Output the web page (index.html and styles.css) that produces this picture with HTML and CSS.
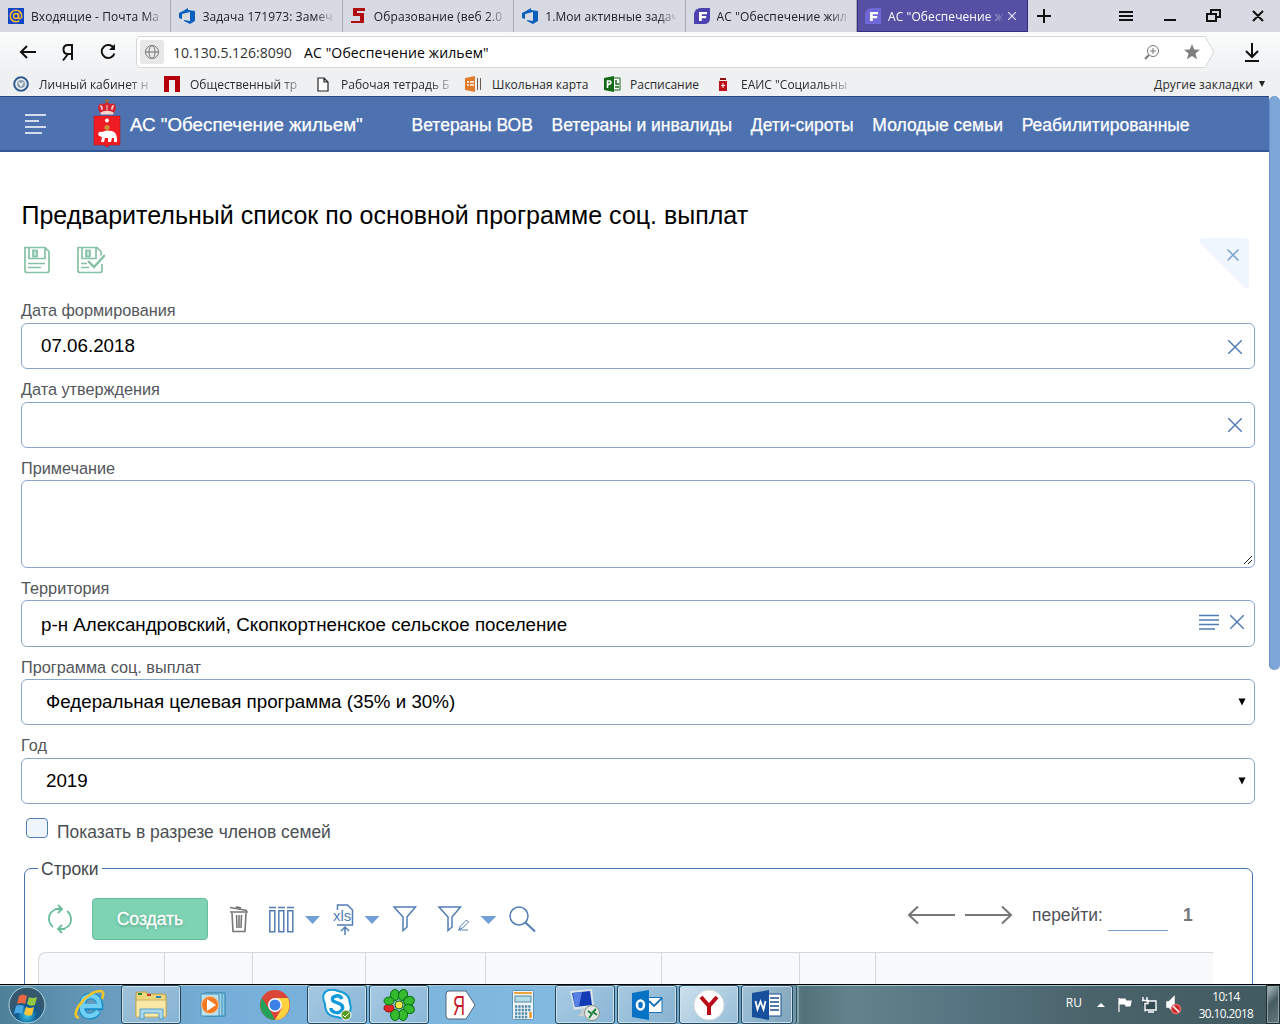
FILE: index.html
```html
<!DOCTYPE html>
<html lang="ru">
<head>
<meta charset="utf-8">
<title>АС "Обеспечение жильем"</title>
<link rel="stylesheet" href="styles.css">
</head>
<body>
<header class="tabs">
  <div class="tab"><svg width="16" height="16"><rect width="16" height="16" fill="#0b45c9"/><path d="M10.6 5.2v4.3c0 2 3.2 1.500 3.200-1.500A5.800 5.800 0 1 0 8 13.800c1.300 0 2.500-.3 3.400-.9" fill="none" stroke="#ffb62e" stroke-width="1.500"/><circle cx="8" cy="8" r="2.500" fill="none" stroke="#ffb62e" stroke-width="1.500"/></svg><span>Входящие - Почта Ма</span></div>
  <div class="tab"><svg width="16" height="16"><path d="M0 5l4-2 5-3v2l7 1v10l-5 3-6-3v-1l6 1V4L3 6v5L0 10z" fill="#0b5fbd"/></svg><span>Задача 171973: Замеч</span></div>
  <div class="tab"><svg width="16" height="16"><path d="M2 0h12v3H6v2h7v10H0v-2h9V8H2z" fill="#b00d10"/></svg><span>Образование (веб 2.0</span></div>
  <div class="tab"><svg width="16" height="16"><path d="M0 5l4-2 5-3v2l7 1v10l-5 3-6-3v-1l6 1V4L3 6v5L0 10z" fill="#0b5fbd"/></svg><span>1.Мои активные задач</span></div>
  <div class="tab"><svg width="16" height="16"><path d="M0 16V6Q1 0 7 0h9v10q0 6-6 6z" fill="#4a42b0"/><path d="M5 13V4h8v2.300H7.800v1.700h4.400v2.200H7.800V13z" fill="#fff"/></svg><span>АС "Обеспечение жил</span></div>
  <div class="tab active"><svg width="16" height="16"><path d="M0 16V6Q1 0 7 0h9v16z" fill="#7068d8"/><path d="M5 13V4h8v2.300H7.800v1.700h4.400v2.200H7.800V13z" fill="#fff"/></svg><span>АС "Обеспечение ж</span><svg class="close" width="8" height="8"><path d="M0 0l8 8M8 0L0 8" stroke="#e5e3ff" stroke-width="1.200"/></svg></div>
  <svg class="controls" width="252" height="32" fill="none" stroke="#111" stroke-width="2"><path d="M9 16h14M16 9v14M91 12h14M91 16h14M91 20h14M136 20h12M179 14h9v7h-9zM183 13v-3h9v7h-4M225 11l10 10M235 11l-10 10"/></svg>
</header>
<div class="toolbar">
  <svg width="136" height="40" fill="none" stroke="#111" stroke-width="2"><path d="M21 20h15M27 14l-6 6 6 6M72 28V13h-4q-4.500 0-4.500 4.500t4.500 4.500h4M68 22L63 28.500M114 16.500a6.500 6.500 0 1 0 .4 5"/><path d="M115 12v6h-6z" fill="#111" stroke="none"/></svg>
  <div class="address">
    <svg class="outline" width="1080" height="32"><path d="M5 .5h1064l9 15.500-9 15.500H5Q.5 31.500 .5 27V5Q.5.5 5 .5z" fill="#fff" stroke="#d5d7d9"/></svg>
    <div class="globe"><svg width="16" height="16" fill="none" stroke="#777"><circle cx="8" cy="8" r="6.500"/><ellipse cx="8" cy="8" rx="3" ry="6.500"/><path d="M1.500 8h13"/></svg></div>
    <span class="ip">10.130.5.126:8090</span><span class="site">АС "Обеспечение жильем"</span>
    <svg class="addr-icons" width="62" height="24"><g fill="none" stroke="#777"><circle cx="11" cy="11" r="5.500"/><path d="M8 11h6M11 8v6"/><path d="M7 15l-4 4" stroke-width="2"/></g><path d="M50 4l2.200 5.500 5.800.3-4.600 3.700 1.700 5.800-5.100-3.300-5.100 3.300 1.700-5.800L42 9.800l5.800-.3z" fill="#7d7d7d"/></svg>
  </div>
  <svg class="download" width="16" height="20" fill="none" stroke="#111" stroke-width="2"><path d="M8 1v14M2 9l6 6 6-6M1 19h14"/></svg>
</div>
<nav class="bookmarks">
  <div class="bm b1"><svg width="16" height="16"><circle cx="8" cy="8" r="6.800" fill="#eee" stroke="#315e91" stroke-width="2"/><circle cx="8" cy="8" r="4" fill="#8da4b7"/><path d="M5 6l3 5 3-5-3 1z" fill="#eee"/></svg><span>Личный кабинет н</span></div>
  <div class="bm b2"><svg width="16" height="16"><path d="M0 0h16v16h-5V4H5v12H0z" fill="#b40009"/></svg><span>Общественный тр</span></div>
  <div class="bm b3"><svg width="12" height="15"><path d="M1 1h6l4 4v9H1zM7 1v4h4" fill="#fff" stroke="#222" stroke-width="1.200"/></svg><span>Рабочая тетрадь Б</span></div>
  <div class="bm b4"><svg width="17" height="16"><path d="M0 2l10-2v16L0 14z" fill="#df7b29"/><path d="M12.500 2v12M15.500 2v12" stroke="#6a5a50"/><path d="M2 6h2M5 6h4M2 9h2M5 9h4" stroke="#fff" stroke-width="1.500"/></svg><span>Школьная карта</span></div>
  <div class="bm b5"><svg width="17" height="16"><path d="M9 2h7v12H9z" fill="#fff" stroke="#17691c"/><path d="M0 2l10-2v16L0 14z" fill="#126a17"/><path d="M3.500 12V5H6q3 2-2.500 4" fill="none" stroke="#fff" stroke-width="1.600"/><path d="M12 4v4h3M11 11h4" stroke="#17691c" stroke-width="1.500" fill="none"/></svg><span>Расписание</span></div>
  <div class="bm b6"><svg width="10" height="14"><path d="M1 4h8v10H1z" fill="#bd1018"/><path d="M2 1h6v2H2z" fill="#8b1014"/><path d="M5 6v5M3 8.500h4" stroke="#fff"/></svg><span>ЕАИС "Социальны</span></div>
  <div class="other"><span>Другие закладки</span><svg width="6" height="6"><path d="M0 0h6L3 6z" fill="#222"/></svg></div>
</nav>
<main class="viewport">
  <div class="page">
    <header class="app-header">
      <svg class="burger" width="22" height="20" stroke="#fff" stroke-width="1.300"><path d="M0 1h21M0 7h14M0 13h21M0 19h17"/></svg>
      <svg class="crest" width="28" height="50"><path d="M1 17h26v29H17l-3 2-3-2H1z" fill="#f01c24" stroke="#b71820" stroke-width=".6"/><path d="M5 8q1-5 6-3l3-2 3 2q5-2 6 3 0 3-2 6H7Q5 11 5 8z" fill="#d42431"/><path d="M8 13.500q6-3 12 0v1.500H8zM9 11q1-5-2-4M19 11q-1-5 2-4M14 11V6" fill="#f7dcd5" stroke="#f4d3cd"/><path d="M14 0v4M12 2h4" stroke="#9c6c30" stroke-width="1.500"/><circle cx="14" cy="21.500" r="2" fill="#fff"/><path d="M14 26v8M11.500 28.500h5" stroke="#c98f3c" stroke-width="3"/><path d="M5 35q1-3 4-2l3-1q6-1 9 1 3 2 3 8v2h-3v-4h-2l-1 4h-3v-4h-3l-1 4H8l1-5-3-1z" fill="#fff"/></svg>
      <span class="brand">АС "Обеспечение жильем"</span>
      <nav class="menu"><span>Ветераны ВОВ</span><span>Ветераны и инвалиды</span><span>Дети-сироты</span><span>Молодые семьи</span><span>Реабилитированные</span></nav>
    </header>
    <section class="content">
      <h1><span>Предварительный список по основной программе соц. выплат</span></h1>
      <div class="actions">
        <svg width="82" height="28" fill="none" stroke="#85c1a4" stroke-width="1.700"><path d="M2 1.500h20l4 4v19q0 2-2 2H4q-2 0-2-2zM6 1.500v11h16V1.500M5 17.500h17M5 21.500h13"/><rect x="10" y="4.500" width="4" height="6" fill="#c7e3df"/><path d="M79 18v6.500q0 2-2 2H57q-2 0-2-2v-23h19l4 4v4M59 1.500v11h14v-11M58 17.500h6M58 21.500h8"/><rect x="63" y="4.500" width="4" height="6" fill="#c7e3df"/><path d="M65 15l6 6 11-12" stroke-width="2.400"/></svg>
        <svg class="corner" width="51" height="52"><path d="M4 0h41q5 0 5 5v41q0 5-4 4L1 5q-2-4 3-5z" fill="#eff6fd"/><path d="M28.500 11.500l11 11M39.500 11.500l-11 11" stroke="#7ba2cf" stroke-width="1.500"/></svg>
      </div>
      <div class="form">
        <label><span>Дата формирования</span></label>
        <div class="field"><span>07.06.2018</span><svg class="x low" width="14" height="14"><path d="M0 0l14 14M14 0L0 14"/></svg></div>
        <label><span>Дата утверждения</span></label>
        <div class="field"><svg class="x" width="14" height="14"><path d="M0 0l14 14M14 0L0 14"/></svg></div>
        <label><span>Примечание</span></label>
        <div class="field area"><svg width="8" height="8" stroke="#222"><path d="M0 8l8-8M4 8l4-4"/></svg></div>
        <label><span>Территория</span></label>
        <div class="field territory"><span>р-н Александровский, Скопкортненское сельское поселение</span><svg class="lines" width="20" height="16"><path d="M0 1.500h20M0 6h20M0 10.500h20M0 15h16"/></svg><svg class="x" width="14" height="14"><path d="M0 0l14 14M14 0L0 14"/></svg></div>
        <label><span>Программа соц. выплат</span></label>
        <div class="field select"><span>Федеральная целевая программа (35% и 30%)</span><svg width="8" height="8"><path d="M.5 .5h7L4 7.500z"/></svg></div>
        <label><span>Год</span></label>
        <div class="field select"><span>2019</span><svg width="8" height="8"><path d="M.5 .5h7L4 7.500z"/></svg></div>
      </div>
      <div class="check"><i></i><span>Показать в разрезе членов семей</span></div>
      <fieldset>
        <legend><span>Строки</span></legend>
        <div class="grid-tools">
          <svg class="refresh" width="24" height="30" fill="none" stroke="#69bd9b" stroke-width="1.800"><path d="M9 5Q-1 8 1.500 18q1 3 3.500 5M7 5h6M10 1l4 4-4 4M15 25q10-3 7.500-13Q21.500 9 19 7M17 25h-6M14 21l-4 4 4 4"/></svg>
          <button><span>Создать</span></button>
          <svg class="trash" width="20" height="28" fill="none" stroke="#777" stroke-width="1.600"><path d="M1 6h18M3 7l1 18.500h12L17 7M7.500 9l.5 13M10 9v13M12.500 9l-.5 13M1 1.500l17 3M7 2.500l1-1.500 4 1"/></svg>
          <svg class="toolset" width="270" height="32" fill="none" stroke="#527eb5" stroke-width="1.500"><path d="M1 3.500h7M10 3.500h7M19 3.500h7M1.800 6.800h5v21h-5zM10.800 6.800h5v21h-5zM19.800 6.800h5v21h-5z"/><path d="M37 12h15l-7.500 8zM96.500 12h15l-7.500 8zM212.500 12h16l-8 8z" fill="#70a0d5" stroke="none"/><path d="M69.500 6V1h10l5 5v15H69M77 31v-8M73 27l4-4 4 4"/><path d="M126 3h21.500l-8.500 10v10l-4 3.500V13zM171 3h21.500l-8.500 10v10l-4 3.500V13z"/><path d="M191 25.500l1.500-3.500 6-6 2 2-6 6zM190 26h10" stroke-width="1"/><circle cx="251" cy="12" r="9"/><path d="M257.500 18.500l9.500 9" stroke-width="2"/><text x="65" y="17">xls</text></svg>
          <div class="pager"><svg width="105" height="20" fill="none" stroke="#777" stroke-width="2"><path d="M47 10H1M10 1.500L1 10l9 8.500M57 10h46M94 1.500l9 8.500-9 8.500"/></svg><span>перейти:</span><i></i><b>1</b></div>
        </div>
        <div class="thead"><i></i><i></i><i></i><i></i><i></i><i></i><i></i><i></i></div>
      </fieldset>
    </section>
  </div>
  <div class="scroll"><i></i></div>
</main>
<footer class="taskbar">
  <div class="task start"><svg width="38" height="38"><defs><radialGradient id="orb" cy=".8"><stop stop-color="#35c7ed"/><stop offset=".55" stop-color="#125a91"/><stop offset="1" stop-color="#35586e"/></radialGradient></defs><circle cx="19" cy="19" r="18" fill="url(#orb)" stroke="#acd4df"/><path d="M11 10q4-3 8 0l-2 8q-4-2-8 0z" fill="#ed6840"/><path d="M21 11q4 2 8 0l-2 8q-4 2-8-1z" fill="#95c843"/><path d="M8 20q4-2 8 0l-2 8q-4-2-8 0z" fill="#47a9e6"/><path d="M18 21q4 2 8 0l-2 8q-4 2-8-1z" fill="#ffc737"/></svg></div>
  <div class="task ie"><svg width="32" height="32" fill="none"><path d="M25 22q-3 6-9 5-8-1-7-11 1-9 9-9 9 0 9 11H11" stroke="#168dca" stroke-width="6.500"/><path d="M25 22q-3 5-9 5-8-1-7-11 1-9 9-9 8 0 8.500 10H11" stroke="#6fd0f4" stroke-width="4.500"/><path d="M6 29C-5 27 14 1 28 2q4 1 1 8" stroke="#f2c629" stroke-width="2.500"/></svg></div>
  <div class="task open"><svg width="34" height="32"><path d="M2 5q0-2 2-2h8l2 2h16q2 0 2 2v20H2z" fill="#efd77b" stroke="#b99c4a"/><path d="M2 11h30v17H2z" fill="#f8e9a7" stroke="#c7ae63"/><path d="M4 5h4" stroke="#25863b" stroke-width="2"/><path d="M13 6h4" stroke="#c63727" stroke-width="2"/><path d="M22 8h5" stroke="#2b83bd" stroke-width="2"/><path d="M6 30V20h23v10h-4v-6H10v6z" fill="#a9d9ee" stroke="#5a9cc2"/></svg></div>
  <div class="task"><svg width="28" height="28"><path d="M7 2h19v23H7z" fill="#8bcbe4" stroke="#317da6"/><path d="M5 2h18v23H5z" fill="#a0d5ea" stroke="#4791b6"/><path d="M2 3h18v22H2z" fill="#b7e1ef" stroke="#4791b6"/><circle cx="11" cy="14" r="8.500" fill="#f27821" stroke="#f9c38e"/><path d="M8 8v12l9-6z" fill="#fff"/></svg></div>
  <div class="task"><svg width="30" height="30"><circle cx="15" cy="15" r="15" fill="#dc4638"/><path d="M2 8l9 14 4 8A15 15 0 0 1 2 8" fill="#23a05a"/><path d="M15 8h13q4 10-3 18-4 4-10 4l7-12z" fill="#ffd23e"/><circle cx="15" cy="15" r="7" fill="#fff"/><circle cx="15" cy="15" r="5.500" fill="#3d80e8"/></svg></div>
  <div class="task open"><svg width="32" height="32"><path d="M8 1q5-1 9 1 12 2 12 13 2 5-1 9-4 7-12 4Q4 27 4 15-1 4 8 1z" fill="#fff" stroke="#129bd8" stroke-width="2"/><path d="M21 10q-2-4-6-3-5 1-3 5l7 3q4 2 2 6-3 4-8 2-3-1-3-4" fill="none" stroke="#129bd8" stroke-width="3.500"/><circle cx="25" cy="26" r="5" fill="#579b22" stroke="#fff"/><path d="M22 26l2 2 4-4" fill="none" stroke="#fff"/></svg></div>
  <div class="task open"><svg width="34" height="34" fill="#35b92d" stroke="#087016"><ellipse cx="13" cy="7" rx="4.500" ry="5.500"/><ellipse cx="21" cy="7" rx="4.500" ry="5.500" transform="rotate(20 21 7)"/><ellipse cx="27" cy="13" rx="5.500" ry="4.500" transform="rotate(-20 27 13)"/><ellipse cx="27" cy="21" rx="5.500" ry="4.500" transform="rotate(20 27 21)"/><ellipse cx="21" cy="27" rx="4.500" ry="5.500"/><ellipse cx="13" cy="27" rx="4.500" ry="5.500"/><ellipse cx="7" cy="20" rx="5" ry="4" fill="#e12627" stroke="#921010"/><ellipse cx="7" cy="13" rx="5" ry="4"/><circle cx="17" cy="17" r="4" fill="#fae249"/></svg></div>
  <div class="task"><svg width="32" height="30"><path d="M1 4q0-3 3-3h17l9 14-9 14H4q-3 0-3-3z" fill="#fff" stroke="#506778"/><text class="yandex" x="8" y="25" textLength="12" lengthAdjust="spacingAndGlyphs">Я</text></svg></div>
  <div class="task"><svg width="22" height="30"><rect x=".5" y=".5" width="21" height="29" rx="1" fill="#eef5f7" stroke="#6094b4"/><path d="M2 3h18" stroke="#eca33b" stroke-width="2"/><rect x="3" y="6" width="16" height="6" fill="#b3dce9" stroke="#56859d"/><path d="M3 16.500h16M3 20h16M3 23.500h13M3 27h13" stroke="#518aab" stroke-width="2.300" stroke-dasharray="2.300 1"/><path d="M18.500 22v6" stroke="#ee9628" stroke-width="2.500"/></svg></div>
  <div class="task open"><svg width="34" height="32"><path d="M2 2l22-2 2 18-20 3z" fill="#dbe5e9"/><path d="M4 4l18-2 2 14-17 2z" fill="#123bb4"/><path d="M5 4l9-1-3 14-4 1z" fill="#5782e4"/><path d="M13 20l6-1 1 5 4 4-15-1 4-3z" fill="#c7cfd2"/><circle cx="24" cy="24" r="7.500" fill="#e3e6e3" stroke="#889389"/><path d="M20 22l4 3-3 4M28 20l-3 3 4 3" fill="none" stroke="#167e35" stroke-width="1.800"/></svg></div>
  <div class="task open"><svg width="32" height="30"><path d="M17 7.500h14v15H17z" fill="#fff" stroke="#1672b7"/><path d="M18 11l5 5 8-8" fill="none" stroke="#1672b7" stroke-width="1.800"/><path d="M1 3l17-3v30L1 27z" fill="#0873c4"/><ellipse cx="9.500" cy="15" rx="3.500" ry="4.500" fill="none" stroke="#fff" stroke-width="2.500"/></svg></div>
  <div class="task open bright"><svg width="32" height="32"><circle cx="16" cy="16" r="15" fill="#fff" stroke="#d9dddf"/><path d="M8 8l8 9 8-9M16 16v10" fill="none" stroke="#b80a17" stroke-width="4"/></svg></div>
  <div class="task open word"><svg width="32" height="30"><path d="M17 4h13v22H17z" fill="#fff" stroke="#194f91"/><path d="M19 8h9M19 12h9M19 16h9M19 20h9" stroke="#194f91" stroke-width="1.500"/><path d="M1 3l17-3v30L1 27z" fill="#164f9b"/><path d="M4.500 11l2 8.500 3-8 3 8 2-8.500" fill="none" stroke="#fff" stroke-width="1.800"/></svg></div>
  <div class="tray"><span class="lang">RU</span><svg width="100" height="26" fill="none" stroke="#fff" stroke-width="1.500"><path d="M15 15l4-4 4 4z" fill="#fff" stroke="none"/><path d="M37 6v14M38 7h5l1 2h5l-1 5h-4l-1-2h-5z" fill="#fff" stroke-width="1.200"/><path d="M64 9h10v9H63V12M66 20h6M61 5v3M65 5v3M60 8.500h6v3h-3v8" fill="#334b53" stroke-width="1.400"/><path d="M85 10h2l5-5v15l-5-5h-2z" fill="#fff"/><circle cx="94" cy="17" r="4.500" fill="#c92b2b" stroke="#ef6868"/><path d="M91 14l6 6" stroke="#fff"/></svg><div class="clock"><span>10:14</span><span>30.10.2018</span></div><i class="desktop"></i></div>
</footer>
</body>
</html>
```
FILE: styles.css
```css
* { box-sizing: border-box; }
body { margin: 0; width: 1280px; height: 1024px; overflow: hidden; display: flex; flex-direction: column; background: #fff; font-family: "Liberation Sans", Arial, sans-serif; color: #000; }
svg { flex: none; display: block; }
span { white-space: nowrap; }
i { display: block; }
.tabs { height: 32px; flex: none; display: flex; background: #d8dae3; font: 12px "Open Sans", sans-serif; color: #202226; }
.tab { width: 171.4px; flex: none; padding-left: 8px; display: flex; align-items: center; gap: 7px; border-right: 1px solid #a6a8ae; overflow: hidden; }
.tab span { width: 131px; letter-spacing: .1px; mask-image: linear-gradient(90deg, #000 86%, #0002); }
.tab.active { background: #5550a4; color: #fff; border-right: 1px solid #332c83; box-shadow: inset 0 -1px #332c83, inset 1px 0 #332c83; }
.tab.active span { width: 115px; }
.tab .close { margin-left: -2px; }
.toolbar { height: 40px; flex: none; display: flex; align-items: center; background: linear-gradient(#fafbfb, #f0f1f3); }
.address { width: 1080px; height: 32px; position: relative; display: flex; align-items: center; font: 14px "Open Sans", sans-serif; padding-left: 4px; }
.address > * { position: relative; }
.address .outline { position: absolute; left: 0; top: 0; }
.globe { width: 24px; height: 24px; background: #e8e8e8; border-radius: 3px; display: grid; place-items: center; }
.ip { margin-left: 9px; width: 119px; color: #333; }
.site { margin-left: 12px; letter-spacing: .12px; }
.addr-icons { margin-left: auto; margin-right: 12px; }
.download { margin-left: 28px; }
.bookmarks { height: 24px; flex: none; display: flex; align-items: center; background: #eff0f2; font: 12px "Open Sans", sans-serif; color: #292b2d; padding: 0 15px 0 13px; }
.bm { display: flex; align-items: center; gap: 10px; flex: none; }
.b1, .b2, .b3 { mask-image: linear-gradient(90deg, #000 76%, #0002 92%); }
.b1 { width: 151px; }
.b2 { width: 153px; }
.b3 { width: 148px; gap: 12px; }
.b4 { width: 139px; }
.b5 { width: 113px; gap: 9px; }
.b6 { width: 133px; gap: 13px; padding-left: 1px; mask-image: linear-gradient(90deg, #000 80%, #0003); }
.other { margin-left: auto; display: flex; align-items: center; gap: 6px; letter-spacing: .12px; }
.viewport { height: 888px; flex: none; display: flex; overflow: hidden; }
.page { width: 1269px; flex: none; }
.app-header { height: 56px; background: #4e72b0; border-top: 1px solid #28477e; border-bottom: 2px solid #315795; color: #fff; display: flex; align-items: center; padding-left: 25px; font-size: 17.5px; }
.app-header span { padding-top: 2px; -webkit-text-stroke: .25px #fff; }
.crest { margin-left: 46px; }
.brand { margin-left: 9px; width: 281.5px; font-size: 18.75px; }
.menu { display: flex; gap: 18.7px; padding-top: 1px; }
.content { padding: 45px 14px 0 21px; }
h1 { height: 37px; line-height: 36px; margin: 0 0 0 .5px; font-size: 25px; font-weight: 400; }
.actions { height: 62px; display: flex; justify-content: space-between; padding: 12px 5px 0 2px; }
.corner { margin-top: -8px; }
.form { display: grid; grid-template-rows: 27px 46px 33px 46px 32px 88px 32px 47px 32px 46px 33px 46px; color: #000; }
label { font-size: 16.25px; line-height: 20px; color: #53565a; align-self: end; padding-bottom: 3px; }
label:nth-of-type(n+3):nth-of-type(-n+5) { padding-bottom: 2px; }
.field { border: 1px solid #89a7cc; border-radius: 6px; display: flex; align-items: center; padding: 0 12px 0 19px; font-size: 18.75px; }
.field > span { margin-bottom: 1px; }
.field > svg { margin-left: auto; }
.field > .x, .field > .lines { stroke: #527eb5; stroke-width: 1.500px; }
.field > .low { margin-top: 2px; }
.field.area { align-items: flex-end; padding: 0 2px 3px 0; }
.territory > .x { margin-left: 11px; margin-bottom: 3px; }
.territory { padding-right: 10px; }
.territory > span { margin-bottom: -2px; }
.territory .lines { margin-bottom: 3px; }
.select { padding-left: 24px; padding-right: 8px; }
.check { height: 55px; display: flex; padding: 14px 0 0 5px; gap: 9px; font-size: 17.45px; color: #4b4f54; }
.check i { width: 22px; height: 20px; background: #eef5fc; border: 1px solid #5380b7; border-radius: 4px; }
.check span { margin-top: 4px; }
fieldset { margin: 0 2px 0 3px; height: 180px; padding: 0 0 0 13px; border: 1px solid #4473aa; border-radius: 7px; }
legend { font-size: 17.5px; line-height: 18px; padding: 0 3px; color: #44474b; }
legend span { position: relative; top: 1px; }
.grid-tools { height: 75px; padding: 21px 0 0 10px; display: flex; align-items: flex-start; }
.refresh { margin-top: 6px; }
button { width: 116px; height: 42px; margin-left: 20px; padding: 0; border: 1px solid #65bd9d; border-radius: 4px; background: #7ed3b3; color: #fff; font: 17.5px "Liberation Sans", sans-serif; text-shadow: 0 1px 3px #47977a; -webkit-text-stroke: .3px #fff; }
.trash { margin: 8px 20px 0 21px; }
.toolset { margin-top: 6px; margin-left: -1px; }
.toolset text { fill: #527eb5; stroke: none; font: 15px "Liberation Sans", sans-serif; }
.pager { display: flex; align-items: center; margin: 2px 0 0 370px; height: 30px; font-size: 17.45px; color: #505257; }
.pager > span { margin-left: 19px; width: 76px; }
.pager > i { width: 60px; height: 31px; border-bottom: 1px solid #7b9fc9; }
.pager > b { margin-left: 15px; color: #73777a; }
.thead { height: 40px; width: 1175px; display: grid; grid-template-columns: 126px 88px 113px 120px 176px 138px 76px 1fr; border: 1px solid #d5d7d9; border-right: 0; border-radius: 8px 0 0 0; background: #f8f9fb; }
.thead i { border-right: 1px solid #d5d7d9; }
.thead i:last-child { border: 0; }
.scroll { flex: 1; }
.scroll i { height: 574px; border-radius: 5px; background: #7da5d8; border-left: 1px solid #6390c7; }
.taskbar { height: 40px; flex: none; display: flex; align-items: center; gap: 2px; padding-left: 2px; border-top: 1px solid #000; background: linear-gradient(90deg, #4e8098, #679bbd 100px, #75afd9 220px, #82bae0 570px, #6b9bba 745px, #53737b 805px, #62838b 850px, #557582 960px, #4a6269 1100px, #405a60); box-shadow: inset 0 1px #a2c3d0; }
.task { width: 60px; height: 39px; flex: none; display: grid; place-items: center; }
.start { width: 50px; }
.ie { width: 65px; padding-left: 4px; }
.open { border: 1px solid #22495f; border-radius: 3px; box-shadow: inset 0 0 0 1px #cae0ec; background: linear-gradient(135deg, #bbd4e4aa, #91b8d5aa); }
.bright { background: linear-gradient(135deg, #e3eff5cc, #a0c6dfcc); }
.word { width: 52px; box-shadow: inset 0 0 0 1px #cae0ec, 3px 0 #6e94a8, 4px 0 #304d58, 6px 0 #83a3ad; }
.yandex { font: 27px "Liberation Sans", sans-serif; fill: #c51925; }
.tray { display: flex; height: 39px; align-items: center; margin-left: auto; color: #fff; font: 12px "Open Sans", sans-serif; }
.lang { margin-top: -5px; }
.clock { width: 72px; display: flex; flex-direction: column; align-items: center; line-height: 17px; margin-left: 8px; font-size: 11.800px; letter-spacing: -.55px; }
.desktop { width: 14px; height: 39px; margin-left: 4px; border: 1px solid #1f3034; background: linear-gradient(135deg, #b5c4c6, #455c62 45%, #65797e); box-shadow: inset 0 0 0 1px #8d9fa2; }
```
